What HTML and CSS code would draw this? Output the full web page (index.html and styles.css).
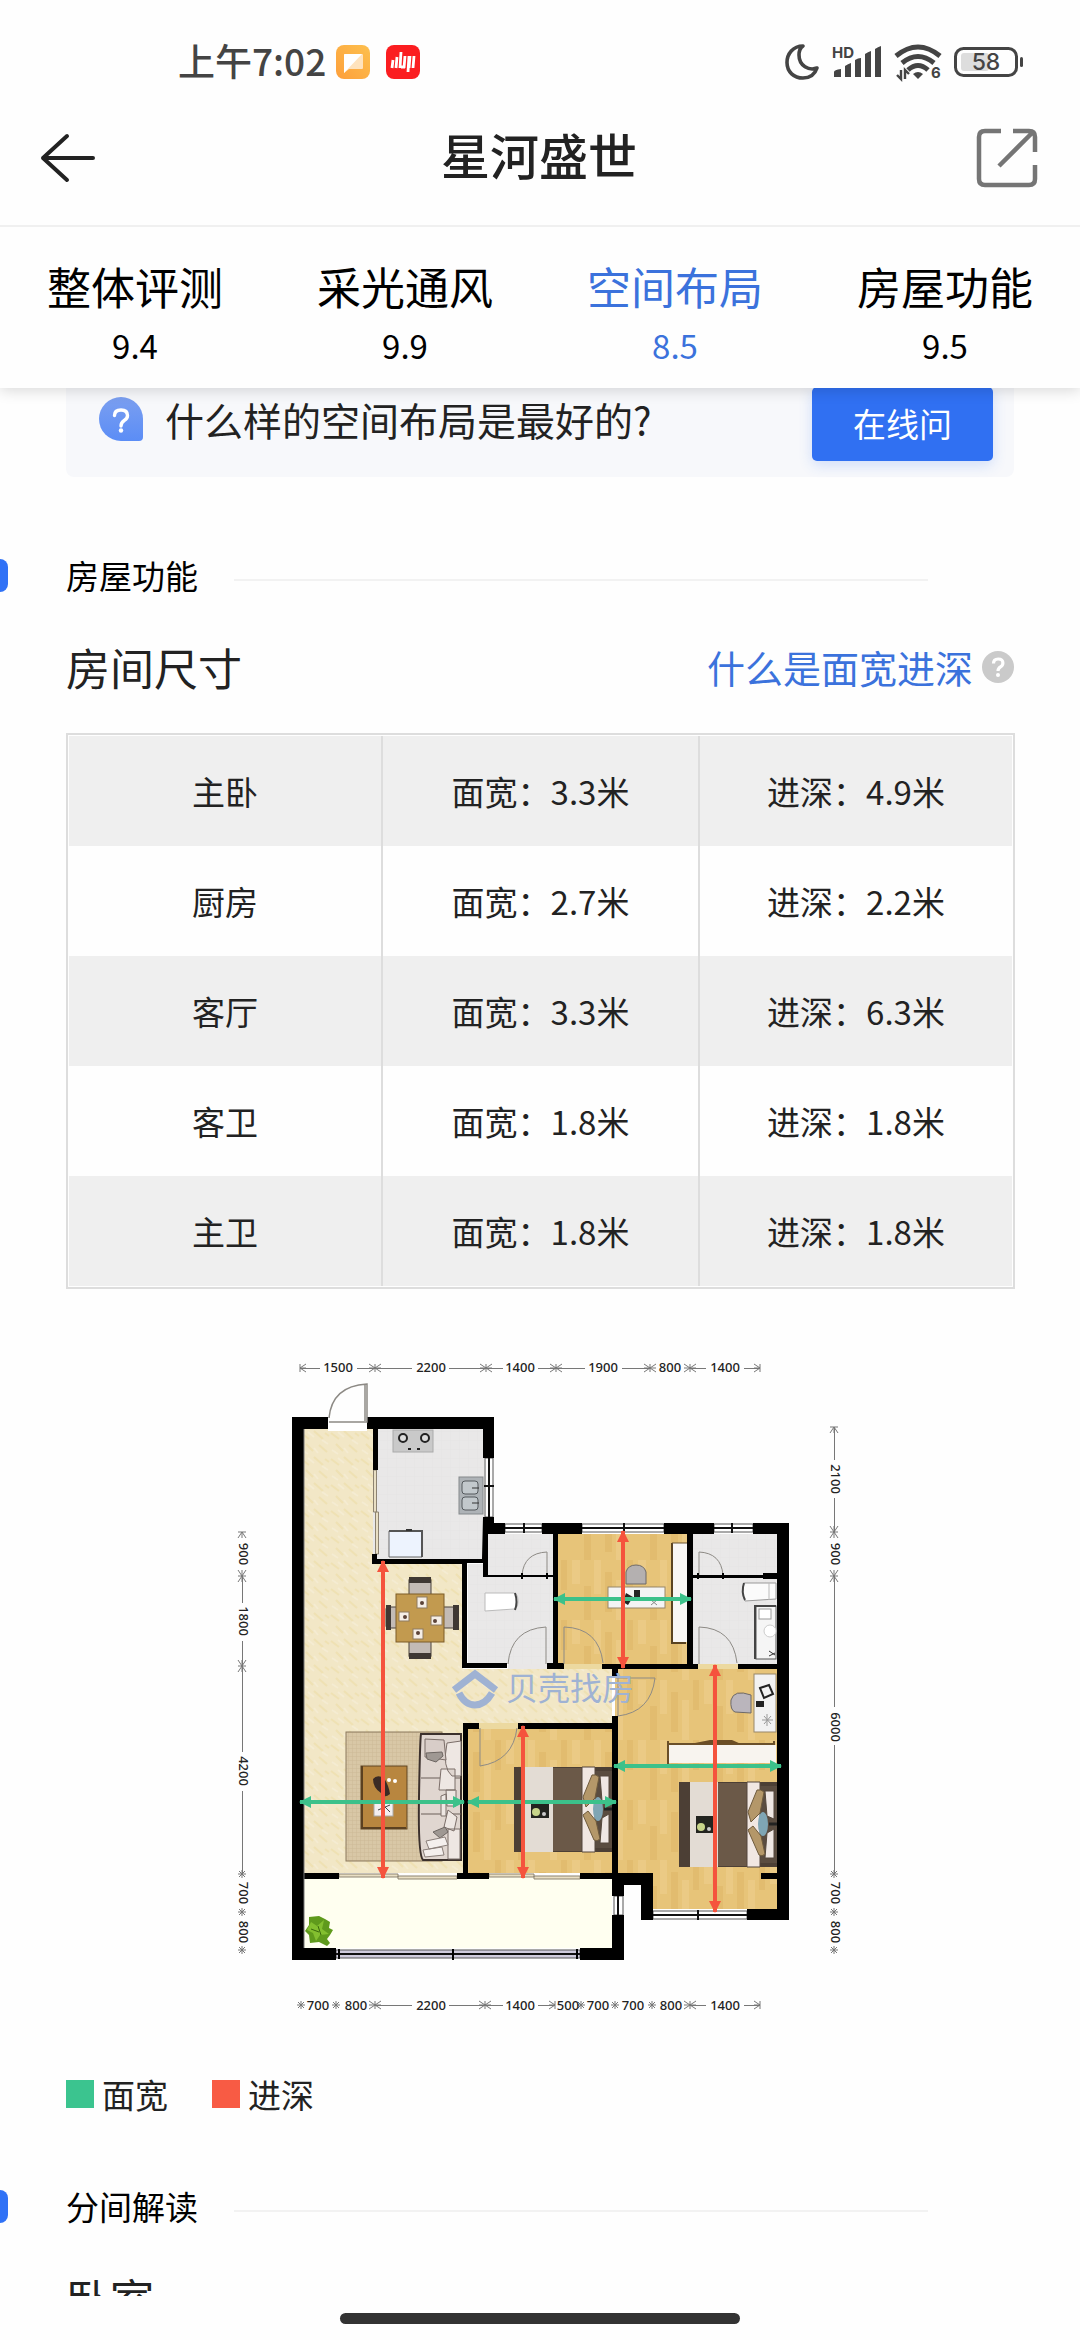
FILE: index.html
```html
<!DOCTYPE html>
<html lang="zh-CN">
<head>
<meta charset="utf-8">
<meta name="viewport" content="width=device-width, initial-scale=1">
<title>星河盛世</title>
<link rel="stylesheet" href="styles.css">
</head>
<body>
<div class="app">
  <header class="top">
    <div class="status">
      <div class="status-left">
        <span class="clock">上午7:02</span>
        <svg class="app-icon" viewBox="0 0 34 34" aria-hidden="true">
          <defs><linearGradient id="og" x1="0" y1="1" x2="1" y2="0"><stop offset="0" stop-color="#fd9f3b"/><stop offset="1" stop-color="#fdc04e"/></linearGradient></defs>
          <rect width="34" height="34" rx="8" fill="url(#og)"/>
          <path d="M8 10q0-1 1-1h17q1 0 1 1v13q0 1-1 1H13l-5 4z" fill="#ffe3bd"/>
          <path d="M8 10q0-1 1-1h17L8 28z" fill="#fff"/>
        </svg>
        <svg class="app-icon app-icon-red" viewBox="0 0 34 34" aria-hidden="true">
          <rect width="34" height="34" rx="8" fill="#fb1d20"/>
          <path d="M7 15l-1 8M11 12l-1 11M15 7l-1 16M19 11l-1 12M19 22h-4M23 11l-1 16M24 11l-1 12M28 11l-1 12" stroke="#fff" stroke-width="2.800" fill="none"/>
        </svg>
      </div>
      <div class="status-right">
        <svg class="moon" viewBox="0 0 34 36" aria-hidden="true"><path d="M18 2C8 2 2 10 2 18.500C2 28 9 34 18 34C25 34 30 30 32 24C24 27 14 22 14 11C14 7 15 4 18 2Z" fill="none" stroke="#444" stroke-width="3.600" stroke-linejoin="round"/></svg>
        <svg class="signal" viewBox="0 0 50 34" aria-hidden="true">
          <text x="0" y="13" class="hd">HD</text>
          <path d="M2 32v-5q0-2 7-3v8zM13 32V21q3-2 6-3v14zM23 32V15q3-2 6-2v19zM33 32V9q3-2 6-3v26zM43 32V4q3-2 6-3v31z" fill="#444"/>
        </svg>
        <svg class="wifi" viewBox="0 0 46 36" aria-hidden="true">
          <g fill="none" stroke="#444" stroke-width="5"><path d="M1 12Q23-6 45 12"/><path d="M7 19Q23 6 39 19"/><path d="M13 26Q23 17 33 26"/></g>
          <path d="M18 30q5-4 10 0l-5 5z" fill="#444"/>
          <path d="M6 26v9l-4-4M10 35v-9l4 4" fill="none" stroke="#444" stroke-width="2.400"/>
          <text x="36" y="34" class="six">6</text>
        </svg>
        <svg class="battery" viewBox="0 0 70 32" aria-hidden="true">
          <rect x="1.500" y="2.500" width="61" height="27" rx="8" fill="none" stroke="#444" stroke-width="3"/>
          <rect x="7" y="7" width="28" height="18" rx="3" fill="#ddd"/>
          <rect x="66" y="11" width="3" height="10" rx="1.500" fill="#444"/>
          <text x="32" y="24" class="pct">58</text>
        </svg>
      </div>
    </div>
    <div class="navbar">
      <button class="icon-btn" type="button" aria-label="返回"><svg class="back" viewBox="0 0 54 48"><path d="M26 2L2 24l24 22M2 24h50" fill="none" stroke="#222" stroke-width="4" stroke-linecap="round" stroke-linejoin="round"/></svg></button>
      <h1>星河盛世</h1>
      <button class="icon-btn" type="button" aria-label="分享"><svg class="share" viewBox="0 0 60 60"><path d="M24 3H8Q2 3 2 9v42q0 6 6 6h44q6 0 6-6V37M58 24V9q0-6-6-6H36M55 5L22 38" fill="none" stroke="#757575" stroke-width="4.500"/></svg></button>
    </div>
    <nav class="tabs">
      <a href="#overall"><span class="tab-name">整体评测</span><span class="tab-score">9.4</span></a>
      <a href="#light"><span class="tab-name">采光通风</span><span class="tab-score">9.9</span></a>
      <a href="#layout" class="active" aria-current="true"><span class="tab-name">空间布局</span><span class="tab-score">8.5</span></a>
      <a href="#function"><span class="tab-name">房屋功能</span><span class="tab-score">9.5</span></a>
    </nav>
  </header>

  <main class="content">
    <div class="ask-card">
      <div class="ask-text">
        <svg class="ask-icon" viewBox="0 0 44 44" aria-hidden="true">
          <defs><linearGradient id="bg" x1="0" y1="0" x2="0" y2="1"><stop offset="0" stop-color="#7b9ff0"/><stop offset="1" stop-color="#5b8df6"/></linearGradient></defs>
          <path d="M22 0a22 22 0 0 1 22 22v18q0 4-4 4H22a22 22 0 0 1 0-44z" fill="url(#bg)"/>
          <path d="M15.500 18.500q0-5.500 6.500-5.500t6.500 5.500q0 3-3 4.800Q22 25.500 22 29" fill="none" stroke="#fff" stroke-width="3.400" stroke-linecap="round"/><circle cx="22" cy="33.500" r="2.200" fill="#fff"/>
        </svg>
        <span>什么样的空间布局是最好的?</span>
      </div>
      <button class="ask-btn" type="button">在线问</button>
    </div>

    <section>
      <div class="section-head"><h2>房屋功能</h2></div>
      <div class="sub-head">
        <h3>房间尺寸</h3>
        <a class="help" href="#help">什么是面宽进深
          <svg class="help-icon" viewBox="0 0 32 32" aria-hidden="true"><circle cx="16" cy="16" r="16" fill="#cacaca"/><path d="M11.500 12.500q0-4.500 4.700-4.500t4.700 4q0 2.500-2.400 3.900Q16 17.500 16 20" fill="none" stroke="#fff" stroke-width="3.200"/><circle cx="16" cy="24" r="2" fill="#fff"/></svg>
        </a>
      </div>
      <table class="sizes">
        <colgroup><col><col class="mid"><col></colgroup>
        <tbody>
          <tr><th scope="row">主卧</th><td>面宽：3.3米</td><td>进深：4.9米</td></tr>
          <tr><th scope="row">厨房</th><td>面宽：2.7米</td><td>进深：2.2米</td></tr>
          <tr><th scope="row">客厅</th><td>面宽：3.3米</td><td>进深：6.3米</td></tr>
          <tr><th scope="row">客卫</th><td>面宽：1.8米</td><td>进深：1.8米</td></tr>
          <tr><th scope="row">主卫</th><td>面宽：1.8米</td><td>进深：1.8米</td></tr>
        </tbody>
      </table>

      <figure class="plan">
        <svg viewBox="66 1340 948 690" role="img" aria-label="户型图">
          <defs>
            <pattern id="wood" width="66" height="60" patternUnits="userSpaceOnUse">
              <rect width="66" height="60" fill="#e7c479"/>
              <path d="M0 0h7v34H0zM22 20h7v40h-7zM44 0h8v24h-8z" fill="#ebca85"/>
              <path d="M11 12h7v40h-7zM33 0h6v30h-6zM56 26h7v34h-7z" fill="#e2bc6f"/>
            </pattern>
            <pattern id="stone" width="30" height="26" patternUnits="userSpaceOnUse">
              <rect width="30" height="26" fill="#f2e7c6"/>
              <path d="M1 3l8 6M14 1l9 8M6 14l7 7M19 15l8 7M25 3l4 3" stroke="#efe1b3" stroke-width="2"/>
              <path d="M8 2l6 5M22 10l6 4M2 20l6 4M14 18l4 5" stroke="#f5ecd2" stroke-width="2"/>
            </pattern>
            <pattern id="tile" width="9" height="9" patternUnits="userSpaceOnUse"><rect width="9" height="9" fill="#e9e8e8"/><path d="M0 0H9M0 0V9" stroke="#e5e4e4" stroke-width="1"/></pattern>
            <pattern id="rugp" width="4" height="4" patternUnits="userSpaceOnUse"><rect width="4" height="4" fill="#d8c7a6"/><path d="M0 0H4M0 0V4" stroke="#ccb997" stroke-width="1"/></pattern>
            <marker id="ar" markerUnits="userSpaceOnUse" markerWidth="14" markerHeight="14" refX="11" refY="6" orient="auto-start-reverse"><path d="M0 0L12 6 0 12z" fill="#f5533d"/></marker>
            <marker id="ag" markerUnits="userSpaceOnUse" markerWidth="14" markerHeight="14" refX="11" refY="6" orient="auto-start-reverse"><path d="M0 0L12 6 0 12z" fill="#3cc18a"/></marker>
            <path id="tk" d="M0-4V4M-6-4L0 0-6 4M6-4L0 0 6 4M-6 0H6"/>
            <path id="tl" d="M0-4V4M6-4L0 0 6 4M0 0H6"/>
            <path id="ts" d="M0-4V4M-3-3L3 3M3-3L-3 3M-4 0H4"/>
            <g id="bed">
              <rect x="0" y="0" width="98" height="85" fill="#4c3f35"/>
              <rect x="76" y="4" width="22" height="77" fill="#5a4c40"/>
              <rect x="11" y="0" width="28" height="85" fill="#e3dcd4"/>
              <rect x="39" y="1" width="29" height="83" fill="#6b5948"/>
              <path d="M68 0h13v85H68z" fill="#f1e7e2" stroke="#54473c"/>
              <path d="M86 9h9v28l-7-3zM86 76h9V47l-7 4z" fill="#efe7e4" stroke="#54473c"/>
              <path d="M69 30l9-22q4-1 7 2l-4 21-9 9zM69 48l5-4 8 10 4 18q-3 3-6 1z" fill="#b49769" stroke="#6f5b3d"/>
              <ellipse cx="84" cy="42" rx="5" ry="12" fill="#7fa5b4"/>
              <path d="M90 42h8" stroke="#222" stroke-width="3"/>
              <rect x="17" y="34" width="18" height="17" fill="#23241f"/><circle cx="22" cy="45" r="4" fill="#c8d58a"/><circle cx="30" cy="47" r="2" fill="#ccc"/>
            </g>
          </defs>

          <!-- floors -->
          <path d="M304 1429H373V1564H463V1669H612V1723H463V1873H304z" fill="url(#stone)"/>
          <rect x="328" y="1423" width="39" height="8" fill="#fff"/>
          <rect x="373" y="1429" width="111" height="131" fill="url(#tile)"/>
          <path d="M468 1564H488V1534H553V1664H468zM693 1534h84v130h-84z" fill="url(#tile)"/>
          <path d="M558 1534H687V1664H558zM468 1729H612V1873H468zM615 1669H777V1909H653V1873H615z" fill="url(#wood)"/>
          <path d="M564 1664h38v5h-38zM698 1664h40v5h-40zM479 1723h39v6h-39z" fill="#ecd9a0"/>
          <path d="M508 1664h39v5h-39z" fill="#e9e7e7"/>
          <rect x="304" y="1876" width="308" height="72" fill="#fffff0"/>

          <!-- sliding doors and windows -->
          <g fill="#e9dfc4" stroke="#8d8371" stroke-width="1">
            <path d="M373.500 1470h3v42h-3zM375.500 1512h3v42h-3zM339 1874h59v3h-59zM398 1876h59v3h-59zM489 1874h45v3h-45zM534 1876h46v3h-46z"/>
          </g>
          <g fill="#fff" stroke="#555" stroke-width="1">
            <path d="M485 1458h8v59h-8zM505 1524h37v8h-37zM582 1524h82v8h-82zM714 1524h39v8h-39zM614 1896h9v19h-9zM653 1911h94v8h-94z"/>
            <path d="M336 1950h244v8H336z" fill="#cfcbdc"/>
          </g>
          <path d="M489 1458v59M484 1486h10M505 1528h37M524 1523v10M582 1528h82M624 1523v10M714 1528h39M732 1523v10M618 1896v19M653 1915h94M698 1910v10M336 1954h244" stroke="#111" stroke-width="2" fill="none"/>
          <path d="M453 1949v11M339 1949v10M577 1949v10" stroke="#000" stroke-width="2"/>

          <!-- walls -->
          <path fill="#000" d="M292 1417h36v12h-24v519h32v12h-44zM367 1417h127v41h-11v-29H378v41h-5v-41h-6zM483 1517h11v6h11v11h-17v41h65v-41h-11v-11h40v11h-24v129h6v6h-17v-6h6v-86h-70v-14h-16v100h40v5h-45V1564h-90v-10h5v5h105zM664 1523h50v11h-21v41h70v-2h14v-39h-24v-11h36v397h-42v-11h30v-30h-16v-6h16V1669h-39v-5h39v-85h-14v-1h-70v86h5v5h-80v8h-6v-8h-10v-5h85V1534h-23zM463 1723h16v6h-11v144h21v6h-32v-6h6zM518 1723h94v-7h6v157h35v36h0v11h-12v-35h-17v11h-12v-17h-32v-6h32v-144h-94zM304 1873h35v6h-35zM612 1915h12v45h-44v-12h32z"/>
          <path d="M304 1429V1948" stroke="#777" stroke-width="1"/>

          <!-- hinged doors -->
          <g fill="none" stroke="#8d8a85" stroke-width="1">
            <path d="M329 1418q3-32 38-34v38h-38M365 1385v36" stroke-width="1.500"/>
            <path d="M522 1575q2-22 25-23v25M508 1664q3-35 38-37v37M603 1663q-4-35-39-36v37M723 1575q-2-22-24-23v23M737 1663q-4-35-38-36v37M480 1728v38q33-5 37-38M616 1678h39q-4 34-37 38v-38"/>
          </g>
          <path d="M522 1573v6M547 1573v6M698 1573v6M723 1573v6" stroke="#000" stroke-width="2"/>

          <!-- kitchen -->
          <rect x="393" y="1430" width="40" height="22" fill="#c9c9c9" stroke="#aaa"/>
          <g fill="#ddd" stroke="#222" stroke-width="2"><circle cx="403" cy="1438" r="4"/><circle cx="425" cy="1438" r="4"/></g>
          <path d="M408 1449h3M417 1449h3" stroke="#222" stroke-width="2"/>
          <rect x="459" y="1477" width="24" height="37" fill="#aeb3b7" stroke="#85898c"/>
          <g fill="#c2c8cc" stroke="#54595d"><rect x="462" y="1481" width="16" height="13" rx="3"/><rect x="462" y="1497" width="16" height="13" rx="3"/></g>
          <path d="M472 1488h7M472 1503h7" stroke="#333"/>
          <path d="M389 1531h33v26h-33z" fill="#edf3fe" stroke="#666"/><path d="M389 1531h33v26" fill="none" stroke="#555" stroke-width="2"/><path d="M406 1530h6" stroke="#333" stroke-width="2"/>

          <!-- dining table -->
          <g fill="#c3bbb5" stroke="#4a423d">
            <rect x="409" y="1578" width="22" height="80" rx="2"/><rect x="386" y="1607" width="72" height="21" rx="2"/>
          </g>
          <path d="M409 1577h22v6h-22zM409 1653h22v6h-22zM386 1605h5v25h-5zM453 1605h6v25h-6z" fill="#3f3833"/>
          <rect x="396" y="1594" width="48" height="48" fill="#c29a4f" stroke="#7c5d28"/>
          <g fill="#f5eee6" stroke="#8d7a61"><rect x="417" y="1597" width="10" height="11"/><rect x="399" y="1612" width="10" height="9"/><rect x="431" y="1616" width="11" height="9"/><rect x="413" y="1629" width="10" height="10"/></g>
          <g fill="#5b4338"><circle cx="422" cy="1603" r="2"/><circle cx="405" cy="1617" r="2"/><circle cx="435" cy="1621" r="2"/><circle cx="418" cy="1633" r="2"/></g>

          <!-- living room -->
          <rect x="346" y="1732" width="96" height="129" fill="url(#rugp)" stroke="#8c7b5f"/>
          <rect x="361" y="1766" width="46" height="63" fill="#b8863f" stroke="#5f4522"/><path d="M362 1766v62h44" fill="none" stroke="#5b4020" stroke-width="2"/>
          <path d="M373 1779q4-5 11-1 5 8 6 16-6 5-9-1-8-5-8-14z" fill="#3b2b25"/><circle cx="389" cy="1780" r="2" fill="#fff"/><circle cx="395" cy="1781" r="2" fill="#fff"/>
          <rect x="374" y="1803" width="19" height="13" fill="#f3eff0" stroke="#aaa"/><path d="M378 1810l12-5M384 1806l6 6" stroke="#444"/>
          <path d="M421 1734h40v126h-38q-5-5-4-63t2-63z" fill="#e0d6d0" stroke="#3b302c" stroke-width="2"/>
          <path d="M421 1778h40M421 1814h40" stroke="#6b5e58"/>
          <path d="M447 1743q-5 25 5 33h9v-35zM441 1769h14v21h-16zM446 1790h10v16h-9zM441 1796l5-2v22h-5zM448 1810l9 7-3 14-10-4zM448 1829h12v30h-12z" fill="#eee7e3" stroke="#7b6e69"/>
          <path d="M425 1739l19 1 2 20-21-3z" fill="#d8cdc8" stroke="#7b6e69"/>
          <path d="M426 1753l16-1 1 4-7 6-9-3zM433 1832l12-5 3 5-8 6z" fill="#9f9893" stroke="#6d6662"/>
          <path d="M426 1841l19-4 3 8-19 4zM423 1850l19-3 2 8-19 2z" fill="#f4efed" stroke="#8a7f7a"/>

          <!-- bathrooms -->
          <path d="M485 1593h29q4 1 4 8t-4 8l-29 2z" fill="#fff" stroke="#bbb"/><path d="M515 1593q3 9 0 17" fill="none" stroke="#444" stroke-width="2"/>
          <path d="M744 1583h32v16l-31 2q-4-9-1-18z" fill="#fbfbfb" stroke="#999"/><path d="M744 1583q-3 9 1 17" fill="none" stroke="#444" stroke-width="2"/><path d="M769 1583v17" stroke="#bbb"/>
          <rect x="756" y="1606" width="20" height="53" fill="#f5f5f5" stroke="#555"/><path d="M755 1659v-53h21" fill="none" stroke="#444" stroke-width="2"/>
          <rect x="759" y="1609" width="12" height="10" fill="#fff" stroke="#999"/><circle cx="770" cy="1631" r="6" fill="#fff" stroke="#ccc"/><path d="M769 1651l6 4M769 1656l6-3" stroke="#333"/>

          <!-- study -->
          <rect x="672" y="1543" width="15" height="99" fill="#f8f6f4"/><path d="M672 1543v100h14" fill="none" stroke="#5a4321" stroke-width="2"/><path d="M672 1543h15" stroke="#6b5432"/>
          <path d="M626 1584v-12q2-7 10-7t10 7v12z" fill="#b4b0b0" stroke="#6d6969"/>
          <rect x="608" y="1587" width="57" height="21" fill="#f4f4f4" stroke="#98876a"/><path d="M634 1590h6v7h-6zM626 1593l7 4-5 8-5-3z" fill="#252525"/><path d="M651 1600l6 5M657 1600l-6 5" stroke="#888"/>

          <!-- bedrooms -->
          <use href="#bed" x="514" y="1767"/>
          <use href="#bed" x="679" y="1782"/>
          <path d="M669 1745h107v18H669z" fill="#f8f4ef"/><path d="M668 1741v24M668 1744h106M774 1741v4" fill="none" stroke="#6a4f29" stroke-width="2"/><path d="M690 1744l20-4h22l9 4z" fill="#6b4d25"/>
          <path d="M751 1695q-17-6-20 5-1 10 4 12l16 1z" fill="#bab5bc" stroke="#6d6969"/>
          <rect x="754" y="1674" width="22" height="58" fill="#f2f2f2" stroke="#98876a"/><path d="M760 1688l9-3 4 9-9 4z" fill="none" stroke="#222" stroke-width="2"/><path d="M756 1701h8v6h-8z" fill="#222"/><path d="M764 1716l7 8M771 1716l-7 8M762 1720h11M767 1714v12" stroke="#999"/>

          <!-- plant -->
          <path d="M309 1917l10-1 6 3 5 3-1 6 4 2-3 5-3 4 3 4-3 3-8-4-9 1-1-8-4-4 4-6z" fill="#5f9a1c"/><path d="M311 1922l6 4 7-6-2 9 7 5-9 1-4 6-3-8-6-3z" fill="#83bf2f"/><path d="M318 1926l3 9M311 1929l8 3" stroke="#39680c"/>

          <!-- watermark -->
          <g fill="none" stroke="#9fb2d3" stroke-width="7"><path d="M454 1690l21-16 21 16"/><path d="M459 1693q6 12 16 12t17-12"/></g>
          <text x="506" y="1700" class="mark">贝壳找房</text>

          <!-- measured spans -->
          <g fill="none" stroke="#3cc18a" stroke-width="4">
            <path d="M300 1802H464" marker-start="url(#ag)" marker-end="url(#ag)"/><path d="M468 1802H616" marker-start="url(#ag)" marker-end="url(#ag)"/><path d="M554 1599H691" marker-start="url(#ag)" marker-end="url(#ag)"/><path d="M614 1766H781" marker-start="url(#ag)" marker-end="url(#ag)"/>
          </g>
          <g fill="none" stroke="#f5533d" stroke-width="4">
            <path d="M383 1561V1878" marker-start="url(#ar)" marker-end="url(#ar)"/><path d="M623 1531V1668" marker-start="url(#ar)" marker-end="url(#ar)"/><path d="M523 1726V1878" marker-start="url(#ar)" marker-end="url(#ar)"/><path d="M715 1665V1912" marker-start="url(#ar)" marker-end="url(#ar)"/>
          </g>

          <!-- dimension lines -->
          <g fill="none" stroke="#777" stroke-width="1">
            <path d="M300 1368.500h20M357 1368.500h55M449 1368.500h54M538 1368.500h47M622 1368.500h28M690 1368.500h16M744 1368.500h16"/>
            <use href="#tl" x="300" y="1368"/><use href="#tk" x="375" y="1368"/><use href="#tk" x="486" y="1368"/><use href="#tk" x="556" y="1368"/><use href="#tk" x="650" y="1368"/><use href="#tk" x="690" y="1368"/><use href="#tl" transform="translate(760 1368) scale(-1 1)"/>
            <path d="M375 2005.500h37M449 2005.500h54M538 2005.500h17M690 2005.500h16M744 2005.500h16"/>
            <use href="#ts" x="301" y="2005"/><use href="#ts" x="336" y="2005"/><use href="#tk" x="375" y="2005"/><use href="#tk" x="485" y="2005"/><use href="#tl" transform="translate(555 2005) scale(-1 1)"/><use href="#ts" x="581" y="2005"/><use href="#ts" x="615" y="2005"/><use href="#ts" x="652" y="2005"/><use href="#tk" x="690" y="2005"/><use href="#tl" transform="translate(760 2005) scale(-1 1)"/>
            <path d="M242.500 1576v27M242.500 1641v111M242.500 1791v83M834.500 1427v33M834.500 1498v34M834.500 1576v131M834.500 1745v129"/>
            <use href="#tl" transform="translate(242 1532) rotate(90)"/><use href="#tk" transform="translate(242 1576) rotate(90)"/><use href="#tk" transform="translate(242 1666) rotate(90)"/><use href="#ts" x="242" y="1874"/><use href="#ts" x="242" y="1912"/><use href="#ts" x="242" y="1950"/>
            <use href="#tl" transform="translate(834 1427) rotate(90)"/><use href="#tk" transform="translate(834 1532) rotate(90)"/><use href="#tk" transform="translate(834 1576) rotate(90)"/><use href="#ts" x="834" y="1874"/><use href="#ts" x="834" y="1912"/><use href="#ts" x="834" y="1950"/>
          </g>
          <g class="dim">
            <text x="338" y="1372">1500</text><text x="431" y="1372">2200</text><text x="520" y="1372">1400</text><text x="603" y="1372">1900</text><text x="670" y="1372">800</text><text x="725" y="1372">1400</text>
            <text x="318" y="2010">700</text><text x="356" y="2010">800</text><text x="431" y="2010">2200</text><text x="520" y="2010">1400</text><text x="568" y="2010">500</text><text x="598" y="2010">700</text><text x="633" y="2010">700</text><text x="671" y="2010">800</text><text x="725" y="2010">1400</text>
            <text transform="translate(239 1554) rotate(90)">900</text><text transform="translate(239 1621) rotate(90)">1800</text><text transform="translate(239 1771) rotate(90)">4200</text><text transform="translate(239 1893) rotate(90)">700</text><text transform="translate(239 1932) rotate(90)">800</text>
            <text transform="translate(831 1479) rotate(90)">2100</text><text transform="translate(831 1554) rotate(90)">900</text><text transform="translate(831 1727) rotate(90)">6000</text><text transform="translate(831 1893) rotate(90)">700</text><text transform="translate(831 1932) rotate(90)">800</text>
          </g>
        </svg>
      </figure>
      <ul class="legend">
        <li class="width">面宽</li>
        <li class="depth">进深</li>
      </ul>
    </section>

    <section>
      <div class="section-head"><h2>分间解读</h2></div>
      <div class="sub-head"><h3>卧室</h3></div>
    </section>
  </main>
  <footer class="home"><span class="home-bar"></span></footer>
</div>
</body>
</html>
```
FILE: styles.css
```css
* { box-sizing: border-box; }

body {
  margin: 0;
  background: #fefefe;
  color: #222;
  font-family: "Noto Sans CJK SC", "Noto Sans", sans-serif;
  font-size: 33px;
  line-height: 48px;
}

h1, h2, h3, ul, figure { margin: 0; padding: 0; font-weight: 400; }
a { color: inherit; text-decoration: none; }
button { border: 0; padding: 0; background: none; font: inherit; color: inherit; }
svg { display: block; flex: none; overflow: visible; }

.app { display: flex; flex-direction: column; height: 100vh; }

/* header */
.top { position: relative; z-index: 1; flex: none; background: #fefefe; box-shadow: 0 2px 14px rgba(0, 0, 0, 0.16); }

.status {
  display: flex;
  justify-content: space-between;
  height: 90px;
  padding: 34px 56px 0 178px;
}
.status-left, .status-right { display: flex; align-items: center; height: 56px; }
.clock { font-size: 37px; font-weight: 500; color: #444; margin-right: 10px; padding-bottom: 4px; }
.app-icon { width: 34px; height: 34px; }
.app-icon-red { margin-left: 16px; }
.status-right { gap: 13px; }
.moon { width: 34px; height: 36px; }
.signal { width: 50px; height: 34px; }
.wifi { width: 46px; height: 36px; }
.battery { width: 70px; height: 32px; }
.hd, .six { font-family: Inter, sans-serif; font-size: 15px; line-height: 16px; font-weight: 700; fill: #444; }
.pct { font-family: Inter, sans-serif; font-size: 23px; line-height: 24px; font-weight: 500; fill: #444; text-anchor: middle; }

.navbar {
  display: flex;
  align-items: center;
  justify-content: space-between;
  height: 137px;
  padding: 0 43px 0 41px;
  border-bottom: 2px solid #f0f0f0;
}
.navbar h1 { font-size: 49px; line-height: 60px; font-weight: 500; padding-bottom: 8px; }
.icon-btn { width: 60px; height: 60px; display: flex; align-items: center; }
.back { width: 54px; height: 48px; }
.share { width: 60px; height: 60px; }

.tabs { display: flex; padding: 29px 0 20px; color: #000; }
.tabs a { flex: 1; display: flex; flex-direction: column; align-items: center; gap: 6px; }
.tab-name { font-size: 44px; line-height: 60px; }
.tab-score { line-height: 46px; }
.tabs .active { color: #3b72dc; }

/* content */
.content { flex: 1; min-height: 0; overflow: hidden; }

.ask-card {
  display: flex;
  align-items: center;
  justify-content: space-between;
  margin: -17px 66px 74px;
  padding: 16px 21px 16px 33px;
  background: #f7f8fb;
  border-radius: 8px;
}
.ask-text { display: flex; align-items: center; gap: 22px; padding-bottom: 10px; font-size: 39px; }
.ask-icon { width: 44px; height: 44px; }
.ask-btn {
  width: 181px;
  height: 74px;
  padding-bottom: 3px;
  border-radius: 5px;
  background: #3070f2;
  color: #fff;
  box-shadow: 0 4px 14px rgba(48, 114, 246, 0.2);
}

.section-head { display: flex; align-items: center; padding-right: 152px; color: #000; }
.section-head::before { content: ""; width: 8px; height: 33px; margin-right: 58px; border-radius: 0 8px 8px 0; background: #3072f6; }
.section-head::after { content: ""; flex: 1; height: 2px; margin: 10px 0 0 36px; background: #f2f2f2; }
.section-head h2 { font-size: 33px; line-height: 48px; }

.sub-head { display: flex; align-items: center; justify-content: space-between; margin: 38px 66px 36px; }
.sub-head h3 { font-size: 44px; line-height: 60px; }
.help { display: flex; align-items: center; gap: 9px; font-size: 38px; color: #3b72dc; }
.help-icon { width: 32px; height: 32px; }

.sizes {
  width: calc(100% - 131px);
  margin: 0 65px 0 66px;
  padding: 1px;
  border: 2px solid #ddd;
  border-spacing: 0;
  table-layout: fixed;
}
.sizes .mid { width: 319px; }
.sizes th, .sizes td { height: 110px; padding: 0; font-weight: 400; text-align: center; }
.sizes tr:nth-child(odd) { background: #efefef; }
.sizes td:nth-child(2) { border: solid #ddd; border-width: 0 2px; }

.plan { margin: 51px 66px 40px; }
.plan svg { width: 100%; height: auto; }
.dim { font-family: "Noto Sans", sans-serif; font-size: 13px; line-height: 16px; font-weight: 500; fill: #222; text-anchor: middle; }
.mark { font-size: 32px; font-weight: 400; fill: #9fb2d3; }

.legend { display: flex; gap: 44px; margin: 0 66px 64px; list-style: none; }
.legend li { display: flex; align-items: center; gap: 8px; }
.legend li::before { content: ""; width: 28px; height: 28px; background: #3bc48f; }
.legend .depth::before { background: #f85b44; }

.home { flex: none; display: flex; justify-content: center; padding: 17px 0 16px; background: #fefefe; }
.home-bar { width: 37%; height: 11px; border-radius: 6px; background: #333; }
```
